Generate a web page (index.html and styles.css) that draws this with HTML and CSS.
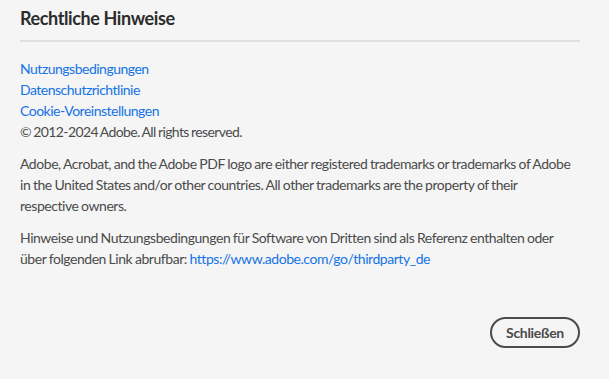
FILE: index.html
```html
<!DOCTYPE html>
<html lang="de">
<head>
<meta charset="utf-8">
<title>Rechtliche Hinweise</title>
<link rel="stylesheet" href="styles.css">
</head>
<body>
<div class="dialog">
  <h1 class="title">Rechtliche Hinweise</h1>
  <hr class="divider">
  <div class="content">
    <ul class="links">
      <li><a href="#" class="link">Nutzungsbedingungen</a></li>
      <li><a href="#" class="link">Datenschutzrichtlinie</a></li>
      <li><a href="#" class="link">Cookie-Voreinstellungen</a></li>
      <li class="copy">© 2012-2024 Adobe. All rights reserved.</li>
    </ul>
    <p class="para">Adobe, Acrobat, and the Adobe PDF logo are either registered trademarks or trademarks of Adobe in the United States and/or other countries. All other trademarks are the property of their <span class="keep">respective owners.</span></p>
    <p class="para">Hinweise und Nutzungsbedingungen für Software von Dritten sind als Referenz enthalten oder über folgenden Link abrufbar: <a href="#" class="link">https://www.adobe.com/go/thirdparty_de</a></p>
  </div>
  <div class="footer">
    <button class="btn" type="button">Schließen</button>
  </div>
</div>
</body>
</html>
```
FILE: styles.css
```css
html,body{margin:0;padding:0;height:100%}
body{background:#f5f5f5;font-family:Lato,"Open Sans",sans-serif;color:#4b4b4b}
.dialog{box-sizing:border-box;height:100%;display:flex;flex-direction:column;padding:6px 29px 31px 20px}
.title{margin:0;font-size:18px;line-height:24px;font-weight:700;color:#2c2c2c;letter-spacing:-0.4px}
.divider{margin:10px 0 0;border:0;height:2px;background:#e1e1e1}
.content{padding-top:16px;font-size:14px;line-height:21px}
.links{list-style:none;margin:0;padding:0;letter-spacing:-0.5px}
.copy{letter-spacing:-0.6px;word-spacing:-0.8px}
.link{color:#1473e6;text-decoration:none}
.para{margin:11px 0 0;letter-spacing:-0.45px;word-spacing:-0.5px}
.keep{white-space:nowrap}
.footer{margin-top:auto;display:flex;justify-content:flex-end}
.btn{box-sizing:border-box;height:31px;width:90px;border:2px solid #4b4b4b;border-radius:16px;background:transparent;font-family:Lato,sans-serif;font-weight:700;font-size:14px;color:#4b4b4b;padding:0;letter-spacing:-0.3px}
```
